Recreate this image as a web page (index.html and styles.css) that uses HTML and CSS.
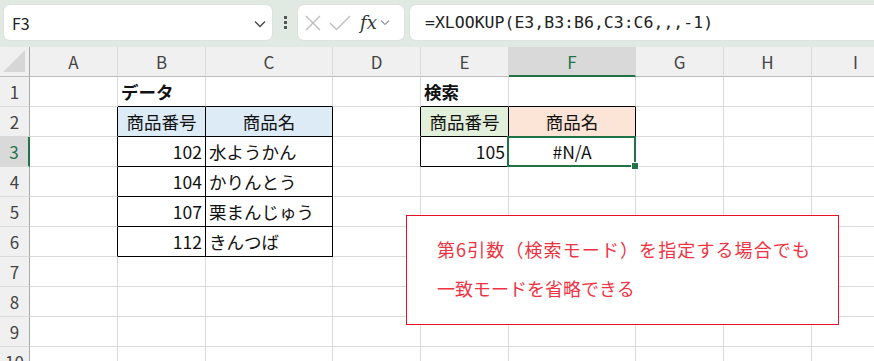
FILE: index.html
```html
<!DOCTYPE html>
<html lang="ja">
<head>
  <meta charset="UTF-8">
  <title>XLOOKUP 検索モード</title>
  <meta name="viewport" content="width=device-width, initial-scale=1.0">
  <link rel="stylesheet" href="styles.css">
</head>
<body>

  <div class="barra">
    <div class="caixa-nome">
      <span>F3</span>
      <svg class="seta" width="12" height="8" viewBox="0 0 12 8"><path d="M1 1.5 L6 6.5 L11 1.5" fill="none" stroke="#444" stroke-width="1.3"/></svg>
    </div>
    <div class="pontos"><i></i><i></i><i></i></div>
    <div class="caixa-fx">
      <svg width="18" height="18" viewBox="0 0 18 18"><path d="M2 2 L16 16 M16 2 L2 16" stroke="#bdbdbd" stroke-width="1.4" fill="none"/></svg>
      <svg width="22" height="18" viewBox="0 0 22 18"><path d="M1 9 L7.5 15.5 L21 2" stroke="#bdbdbd" stroke-width="1.4" fill="none"/></svg>
      <span class="fx">fx</span>
      <svg width="10" height="7" viewBox="0 0 10 7"><path d="M1 1.5 L5 5.5 L9 1.5" fill="none" stroke="#999" stroke-width="1.1"/></svg>
    </div>
    <div class="caixa-formula">=XLOOKUP(E3,B3:B6,C3:C6,,,-1)</div>
  </div>

  <div class="planilha">
    <div class="cab canto"><span class="tri"></span></div>
    <div class="cab">A</div>
    <div class="cab">B</div>
    <div class="cab">C</div>
    <div class="cab">D</div>
    <div class="cab">E</div>
    <div class="cab ativo-col">F</div>
    <div class="cab">G</div>
    <div class="cab">H</div>
    <div class="cab">I</div>

    <!-- linha 1 -->
    <div class="num">1</div>
    <div class="cel"></div>
    <div class="cel titulo borda-baixo">データ</div>
    <div class="cel borda-baixo"></div>
    <div class="cel"></div>
    <div class="cel titulo borda-baixo">検索</div>
    <div class="cel borda-baixo"></div>
    <div class="cel"></div>
    <div class="cel"></div>
    <div class="cel"></div>

    <!-- linha 2 -->
    <div class="num">2</div>
    <div class="cel borda-dir"></div>
    <div class="cel tab centro azul">商品番号</div>
    <div class="cel tab centro azul">商品名</div>
    <div class="cel borda-dir"></div>
    <div class="cel tab centro verde">商品番号</div>
    <div class="cel tab centro laranja">商品名</div>
    <div class="cel"></div>
    <div class="cel"></div>
    <div class="cel"></div>

    <!-- linha 3 -->
    <div class="num ativo-lin">3</div>
    <div class="cel borda-dir"></div>
    <div class="cel tab dir">102</div>
    <div class="cel tab">水ようかん</div>
    <div class="cel borda-dir"></div>
    <div class="cel tab dir">105</div>
    <div class="cel tab centro selecionada">#N/A</div>
    <div class="cel"></div>
    <div class="cel"></div>
    <div class="cel"></div>

    <!-- linha 4 -->
    <div class="num">4</div>
    <div class="cel borda-dir"></div>
    <div class="cel tab dir">104</div>
    <div class="cel tab">かりんとう</div>
    <div class="cel"></div>
    <div class="cel"></div>
    <div class="cel"></div>
    <div class="cel"></div>
    <div class="cel"></div>
    <div class="cel"></div>

    <!-- linha 5 -->
    <div class="num">5</div>
    <div class="cel borda-dir"></div>
    <div class="cel tab dir">107</div>
    <div class="cel tab">栗まんじゅう</div>
    <div class="cel"></div>
    <div class="cel"></div>
    <div class="cel"></div>
    <div class="cel"></div>
    <div class="cel"></div>
    <div class="cel"></div>

    <!-- linha 6 -->
    <div class="num">6</div>
    <div class="cel borda-dir"></div>
    <div class="cel tab dir">112</div>
    <div class="cel tab">きんつば</div>
    <div class="cel"></div>
    <div class="cel"></div>
    <div class="cel"></div>
    <div class="cel"></div>
    <div class="cel"></div>
    <div class="cel"></div>

    <div class="num">7</div>
    <div class="cel"></div><div class="cel"></div><div class="cel"></div><div class="cel"></div><div class="cel"></div><div class="cel"></div><div class="cel"></div><div class="cel"></div><div class="cel"></div>
    <div class="num">8</div>
    <div class="cel"></div><div class="cel"></div><div class="cel"></div><div class="cel"></div><div class="cel"></div><div class="cel"></div><div class="cel"></div><div class="cel"></div><div class="cel"></div>
    <div class="num">9</div>
    <div class="cel"></div><div class="cel"></div><div class="cel"></div><div class="cel"></div><div class="cel"></div><div class="cel"></div><div class="cel"></div><div class="cel"></div><div class="cel"></div>
    <div class="num">10</div>
    <div class="cel"></div><div class="cel"></div><div class="cel"></div><div class="cel"></div><div class="cel"></div><div class="cel"></div><div class="cel"></div><div class="cel"></div><div class="cel"></div>

    <div class="nota">
      <p class="linha-longa">第6引数（検索モード）を指定する場合でも</p>
      <p>一致モードを省略できる</p>
    </div>
  </div>

</body>
</html>
```

FILE: styles.css
```css
body {
  margin: 0;
  background-color: #ffffff;
  font-family: "Noto Sans CJK JP", "Noto Sans", sans-serif;
  color: #222;
  overflow: hidden;
}

/* barra de fórmulas */
.barra {
  height: 47px;
  background-color: #e1e9e3;
  display: flex;
  align-items: center;
  padding: 0 0 2px 4px;
  box-sizing: border-box;
}

.caixa-nome {
  width: 268px;
  height: 35px;
  background-color: #fff;
  border-radius: 6px;
  box-shadow: 0 0 0 1px #dde3de;
  display: flex;
  align-items: center;
  justify-content: space-between;
  padding: 0 6px 0 8px;
  box-sizing: border-box;
  font-size: 16px;
  color: #222;
}

.caixa-nome .seta {
  margin-top: 2px;
}

.pontos {
  width: 26px;
  display: flex;
  flex-direction: column;
  align-items: center;
  gap: 2px;
}

.pontos i {
  display: block;
  width: 3px;
  height: 3px;
  background-color: #555;
}

.caixa-fx {
  width: 106px;
  height: 35px;
  background-color: #fff;
  border-radius: 6px;
  box-shadow: 0 0 0 1px #dde3de;
  display: flex;
  align-items: center;
  padding-left: 6px;
  box-sizing: border-box;
  gap: 7px;
}

.caixa-fx .fx {
  font-family: "DejaVu Serif", "Liberation Serif", serif;
  font-style: italic;
  font-size: 18px;
  color: #333;
  margin-left: 2px;
  margin-right: -4px;
}

.caixa-formula {
  flex: 1;
  height: 35px;
  margin-left: 6px;
  background-color: #fff;
  border-radius: 6px 0 0 6px;
  box-shadow: 0 0 0 1px #dde3de;
  display: flex;
  align-items: center;
  padding-left: 15px;
  font-family: "DejaVu Sans Mono", "Liberation Mono", monospace;
  font-size: 16.5px;
  color: #222;
}

/* planilha */
.planilha {
  position: relative;
  display: grid;
  grid-template-columns: 30px 88px 88px 127px 88px 88px 127px 88px 88px 88px;
  grid-template-rows: 30px repeat(10, 30px);
}

.cab {
  background-color: #f0f0f0;
  border-right: 1px solid #dadada;
  border-bottom: 1px solid #bdbdbd;
  display: flex;
  align-items: center;
  justify-content: center;
  font-size: 17px;
  color: #444;
  box-sizing: border-box;
}

.canto {
  position: relative;
  border-right: 1px solid #a8a8a8;
}

.tri {
  position: absolute;
  right: 4px;
  bottom: 4px;
  width: 0;
  height: 0;
  border-left: 22px solid transparent;
  border-bottom: 22px solid #d6d6d6;
}

.ativo-col {
  background-color: #d9d9d9;
  color: #217346;
  border-bottom: 2px solid #217346;
}

.num {
  background-color: #f0f0f0;
  border-right: 1px solid #a8a8a8;
  border-bottom: 1px solid #dadada;
  display: flex;
  align-items: center;
  justify-content: center;
  font-size: 17px;
  color: #444;
  box-sizing: border-box;
}

.ativo-lin {
  background-color: #d9d9d9;
  color: #217346;
  border-right: 2px solid #217346;
}

.cel {
  border-right: 1px solid #dadada;
  border-bottom: 1px solid #dadada;
  display: flex;
  align-items: center;
  padding: 0 3px;
  box-sizing: border-box;
  font-size: 17.5px;
  color: #111;
  white-space: nowrap;
}

.titulo {
  font-weight: bold;
}

.borda-baixo {
  border-bottom-color: #000;
}

.borda-dir {
  border-right-color: #000;
}

.tab {
  border-right-color: #000;
  border-bottom-color: #000;
}

.centro {
  justify-content: center;
}

.dir {
  justify-content: flex-end;
}

.azul {
  background-color: #ddebf7;
}

.verde {
  background-color: #e2efda;
}

.laranja {
  background-color: #fce4d6;
}

.selecionada {
  position: relative;
}

.selecionada::after {
  content: "";
  position: absolute;
  left: -2px;
  top: -1px;
  right: -1px;
  bottom: -1px;
  border: 2px solid #217346;
}

.selecionada::before {
  content: "";
  position: absolute;
  right: -4px;
  bottom: -4px;
  width: 6px;
  height: 6px;
  background-color: #217346;
  border: 1px solid #fff;
  z-index: 2;
}

/* caixa de texto vermelha */
.nota {
  position: absolute;
  left: 406px;
  top: 168px;
  width: 433px;
  height: 110px;
  box-sizing: border-box;
  background-color: #fff;
  border: 1px solid #e81123;
  padding: 14px 0 0 30px;
  color: #ee3342;
  font-size: 18px;
  line-height: 39px;
}

.nota p {
  margin: 0;
}

.nota .linha-longa {
  letter-spacing: 1.1px;
}
```
